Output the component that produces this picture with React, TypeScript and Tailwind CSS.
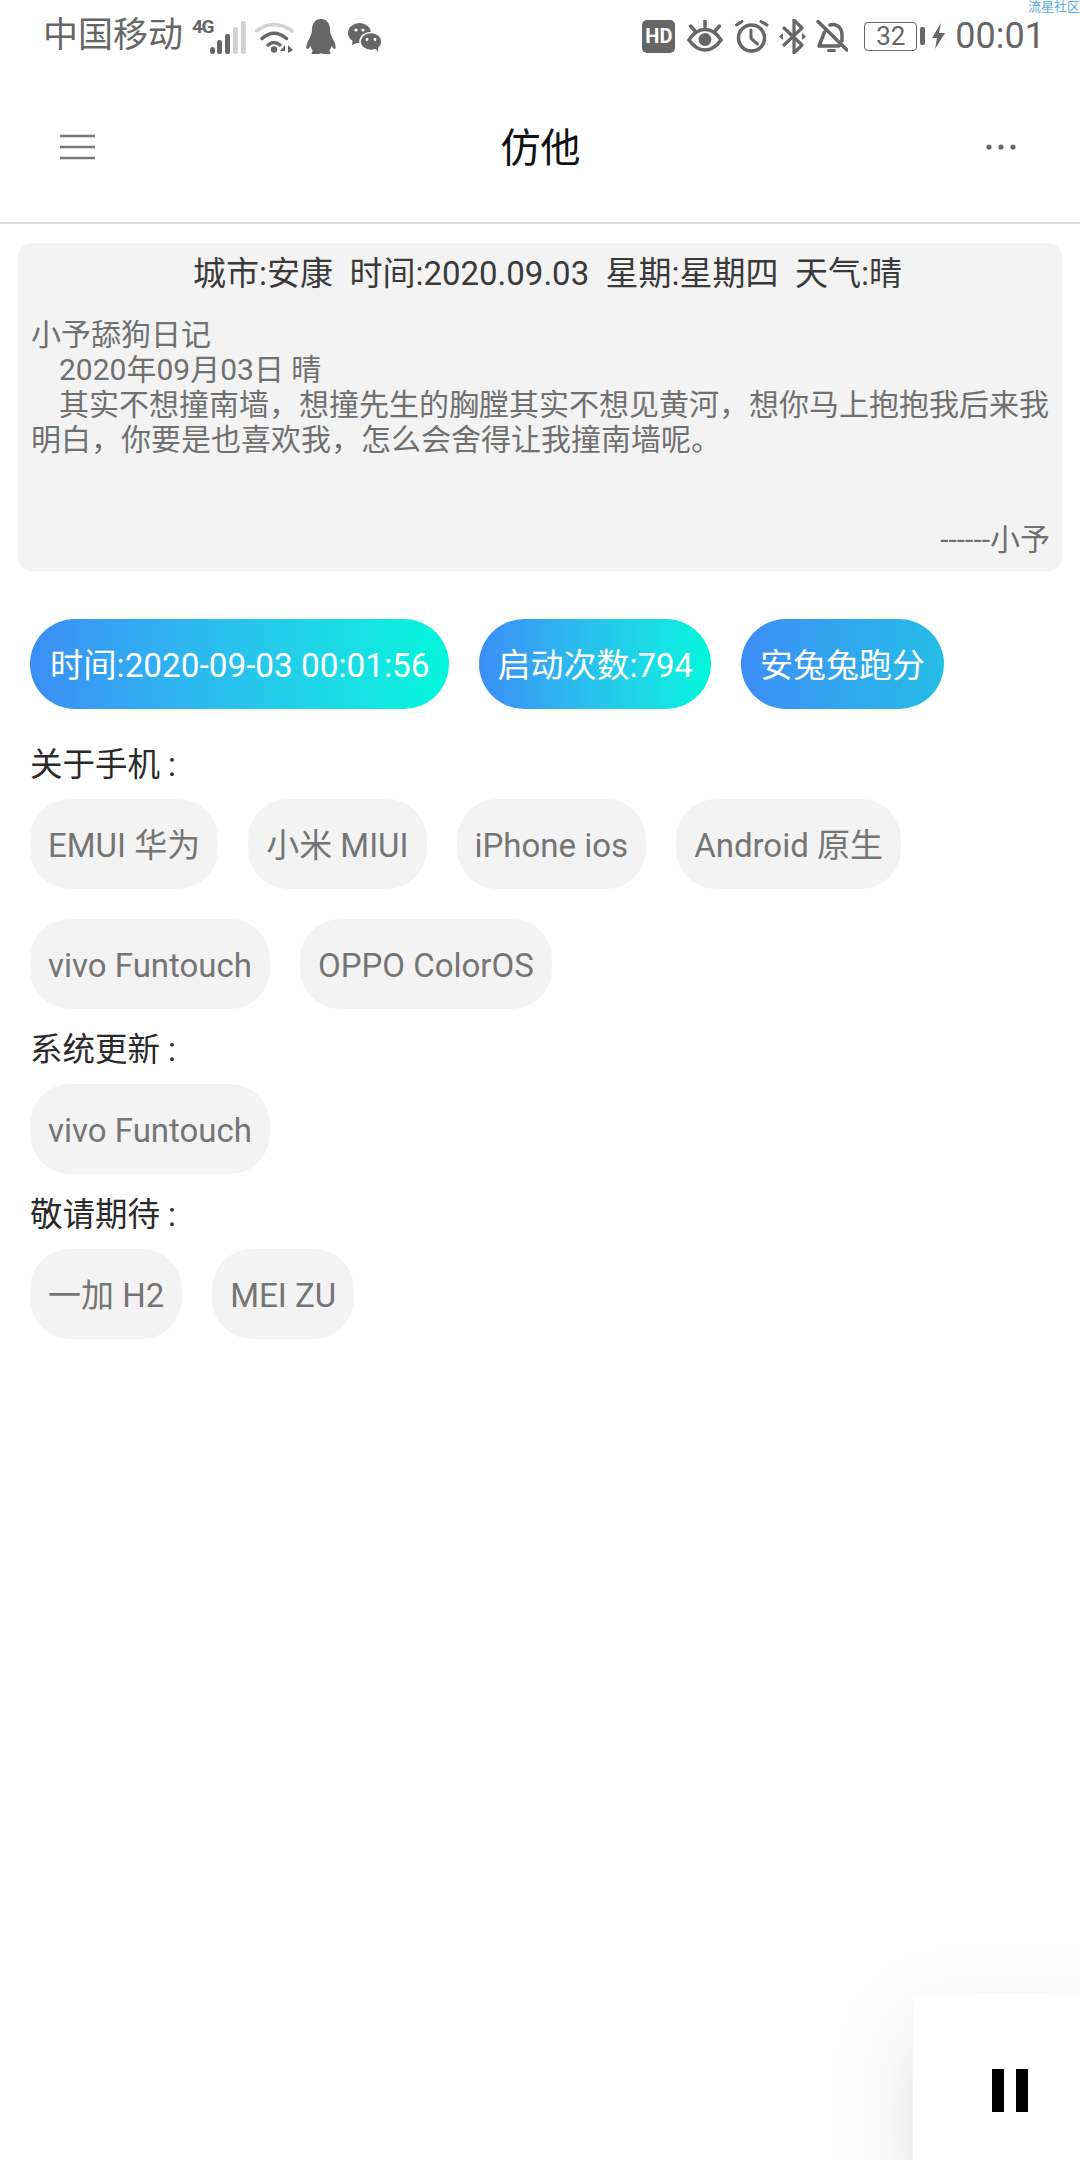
import React from 'react';

const SANS = 'font-[Roboto,"Noto_Sans_CJK_SC",sans-serif]';

const Signal = () => (
  <svg width="36" height="33" viewBox="0 0 36 33" className="shrink-0">
    <rect x="0" y="26" width="5" height="7" rx="2.5" fill="#666" />
    <rect x="7" y="19" width="5" height="14" rx="2" fill="#666" />
    <rect x="15" y="13" width="5" height="20" rx="2" fill="#666" />
    <rect x="23" y="6" width="5" height="27" rx="2" fill="#d2d2d2" />
    <rect x="31" y="0" width="5" height="33" rx="2" fill="#d2d2d2" />
  </svg>
);

const Wifi = () => (
  <svg width="40" height="33" viewBox="0 0 40 33" fill="none" className="shrink-0">
    <path d="M1.5 10 Q19 -3 37 10" stroke="#d2d2d2" strokeWidth="3.5" strokeLinecap="round" />
    <path d="M7 17.5 Q19 7 31.5 17.5" stroke="#666" strokeWidth="3.5" strokeLinecap="round" />
    <path d="M13 24 Q19 19 25 24" stroke="#666" strokeWidth="3.5" strokeLinecap="round" />
    <circle cx="19" cy="28.5" r="3.2" fill="#666" />
    <path d="M25 30 L30 24 V30 Z M33 24 V32 L38 29 Z" fill="#666" />
  </svg>
);

const QQ = () => (
  <svg width="30" height="35" viewBox="0 0 30 35" className="shrink-0">
    <path
      d="M15 0 C8 0 6 6 6 11 C6 15 4 18 2 22 C0 26 0 30 1 30 C2.5 30 3.5 28 4.5 27 C5 29 6 31 7 32 C5 33 5 35 7 35 L13 35 Q15 33.5 17 35 L23 35 C25 35 25 33 23 32 C24 31 25 29 25.5 27 C26.5 28 27.5 30 29 30 C30 30 30 26 28 22 C26 18 24 15 24 11 C24 6 22 0 15 0 Z"
      fill="#666"
    />
  </svg>
);

const WeChat = () => (
  <svg width="34" height="29" viewBox="0 0 34 29" className="shrink-0">
    <ellipse cx="11.5" cy="10" rx="11.5" ry="10" fill="#666" />
    <path d="M5 15 L4 22 L11 19 Z" fill="#666" />
    <circle cx="8" cy="7" r="1.6" fill="#fff" />
    <circle cx="15" cy="7" r="1.6" fill="#fff" />
    <ellipse cx="23" cy="18.5" rx="11" ry="9" fill="#666" stroke="#fff" strokeWidth="1.5" />
    <path d="M27 25 L30 29 L30 22 Z" fill="#666" />
    <circle cx="19" cy="16.5" r="1.4" fill="#fff" />
    <circle cx="27" cy="16.5" r="1.4" fill="#fff" />
  </svg>
);

const Eye = () => (
  <svg width="36" height="32" viewBox="0 0 36 32" fill="none" stroke="#666" strokeWidth="3.5" strokeLinecap="round" className="shrink-0">
    <path d="M2 20 C7 12 12 9.5 18 9.5 C24 9.5 29 12 34 20 C29 27 24 30 18 30 C12 30 7 27 2 20 Z" />
    <path d="M18 1 V7 M3.5 6 L8 11 M32.5 6 L28 11" />
    <circle cx="18" cy="19.5" r="6.5" fill="#666" stroke="none" />
  </svg>
);

const Alarm = () => (
  <svg width="34" height="33" viewBox="0 0 34 33" fill="none" stroke="#666" strokeWidth="3.5" strokeLinecap="round" strokeLinejoin="round" className="shrink-0">
    <circle cx="16.5" cy="18" r="13" />
    <path d="M16 10 V18.5 L22.5 24" strokeWidth="3" />
    <path d="M1.5 5 L7 1.5 M32 5 L26 1.5" strokeWidth="3" />
  </svg>
);

const Bluetooth = () => (
  <svg width="27" height="35" viewBox="0 0 27 35" fill="none" className="shrink-0">
    <path d="M5 9 L23 26 L15 34 V1 L23 9 L5 26" stroke="#666" strokeWidth="3.2" strokeLinejoin="round" strokeLinecap="round" />
    <path d="M0 17.5 L4 14 V21 Z M27 17.5 L23 14 V21 Z" fill="#666" />
  </svg>
);

const BellOff = () => (
  <svg width="32" height="33" viewBox="0 0 32 33" fill="none" stroke="#666" strokeWidth="3.5" strokeLinecap="round" strokeLinejoin="round" className="shrink-0">
    <path d="M14 5 C21 3 26 8 26 15 V21" />
    <path d="M8.5 12 L3 26 H23" />
    <path d="M12.5 30.5 H18.5" strokeWidth="3" />
    <path d="M2 1.5 L31 30" />
  </svg>
);

const Bolt = () => (
  <svg width="13" height="26" viewBox="0 0 13 26" className="shrink-0">
    <path d="M9 0 L0 15 H5 L3 26 L13 10 H7 Z" fill="#666" />
  </svg>
);

const StatusBar = () => (
  <div className="flex h-[72px] items-center justify-between pl-[43px] pr-[35px] text-[#666]">
    <div className="flex items-center">
      <span className="w-[149px] text-[35px] leading-[40px]">中国移动</span>
      <span className="-mt-[19px] w-[18px] text-[19px] leading-[14px] font-bold tracking-[-1.5px]">4G</span>
      <div className="mt-[2px]"><Signal /></div>
      <div className="ml-[9px] mt-[2px]"><Wifi /></div>
      <div className="ml-[11px]"><QQ /></div>
      <div className="ml-[12px] mt-[2px]"><WeChat /></div>
    </div>
    <div className="flex items-center">
      <span className="flex h-[33px] w-[33px] items-center justify-center rounded-[5px] bg-[#666] text-[20px] font-bold text-white">HD</span>
      <div className="ml-[12px]"><Eye /></div>
      <div className="ml-[12px]"><Alarm /></div>
      <div className="ml-[10px]"><Bluetooth /></div>
      <div className="ml-[10px]"><BellOff /></div>
      <span className="ml-[16px] flex h-[29px] w-[53px] items-center justify-center rounded-[4px] border border-[#666] text-[26px] leading-none">32</span>
      <span className="ml-[3px] h-[18px] w-[5px] rounded-[2px] bg-[#666]" />
      <div className="ml-[7px]"><Bolt /></div>
      <span className="ml-[10px] text-[36px] leading-[40px]">00:01</span>
    </div>
  </div>
);

const Header = () => (
  <div className="flex h-[152px] items-center justify-between border-b-2 border-[#dddddd] pl-[60px] pr-[64px]">
    <svg width="35" height="26" viewBox="0 0 35 26" stroke="#777" strokeWidth="2.5">
      <path d="M0 2 H35 M0 13 H35 M0 24 H35" />
    </svg>
    <h1 className="mt-[4px] text-[40px] leading-[50px] font-normal text-[#111]">仿他</h1>
    <svg width="30" height="6" viewBox="0 0 30 6" fill="#666">
      <circle cx="3" cy="3" r="2.6" />
      <circle cx="15" cy="3" r="2.6" />
      <circle cx="27" cy="3" r="2.6" />
    </svg>
  </div>
);

const DiaryCard = () => (
  <div className="mx-[18px] mt-[19px] flex h-[328px] flex-col rounded-[14px] bg-[#f3f3f3] pl-[13px] pr-[12px]">
    <p className="whitespace-pre pl-[14px] pt-[1px] text-center text-[33px] leading-[59px] text-[#3a3a3a]">城市:安康  时间:2020.09.03  星期:星期四  天气:晴</p>
    <div className="mt-[14px] text-[30px] leading-[35px] text-[#707070]">
      <p>小予舔狗日记</p>
      <p className="indent-[28px]">2020年09月03日 晴</p>
      <p className="indent-[28px]">其实不想撞南墙，想撞先生的胸膛其实不想见黄河，想你马上抱抱我后来我明白，你要是也喜欢我，怎么会舍得让我撞南墙呢。</p>
    </div>
    <p className="mb-[14px] mt-auto text-right text-[30px] leading-[35px] text-[#707070]">------小予</p>
  </div>
);

const Chip = ({ label }: { label: string }) => (
  <span className="flex h-[90px] items-center rounded-[40px] bg-[#f3f3f3] px-[18px] pt-[4px] text-[33px] text-[#757575]">{label}</span>
);

const Section = ({ title, items }: { title: string; items: string[] }) => (
  <div>
    <p className="mb-[16px] pt-[2px] text-[32.5px] leading-[36px] text-[#2a2a2a]">{title}</p>
    <div className="flex flex-wrap gap-[30px]">
      {items.map((item) => (
        <Chip key={item} label={item} />
      ))}
    </div>
  </div>
);

export default function App() {
  return (
    <div className={`relative h-[2160px] w-[1080px] overflow-hidden bg-white ${SANS}`}>
      <span className="absolute right-0 top-0 text-[13px] leading-[14px] text-[#5aa9e0]">流星社区</span>
      <StatusBar />
      <Header />
      <DiaryCard />

      <div className="px-[30px]">
        <div className="mt-[48px] flex gap-[30px] text-[33px] text-white">
          <span className="flex h-[90px] items-center rounded-[45px] bg-linear-to-r from-[#3b8df6] to-[#00f6dc] px-[20px] pt-[3px] text-[33.3px]">时间:2020-09-03 00:01:56</span>
          <span className="flex h-[90px] items-center rounded-[45px] bg-linear-to-r from-[#3b8df6] to-[#00f6dc] px-[18px] pt-[3px]">启动次数:794</span>
          <span className="flex h-[90px] items-center rounded-[45px] bg-linear-to-r from-[#3b8df6] to-[#25bde5] px-[19px] pt-[3px]">安兔兔跑分</span>
        </div>

        <div className="mt-[36px] flex flex-col gap-[21px]">
          <Section title="关于手机 :" items={['EMUI 华为', '小米 MIUI', 'iPhone ios', 'Android 原生', 'vivo Funtouch', 'OPPO ColorOS']} />
          <Section title="系统更新 :" items={['vivo Funtouch']} />
          <Section title="敬请期待 :" items={['一加 H2', 'MEI ZU']} />
        </div>
      </div>

      <div className="absolute left-[913px] top-[1994px] flex h-[192px] w-[194px] items-center justify-center gap-[12px] bg-white shadow-[0_30px_90px_rgba(0,0,0,0.12)]">
        <span className="h-[43px] w-[12px] bg-black" />
        <span className="h-[43px] w-[12px] bg-black" />
      </div>
    </div>
  );
}
